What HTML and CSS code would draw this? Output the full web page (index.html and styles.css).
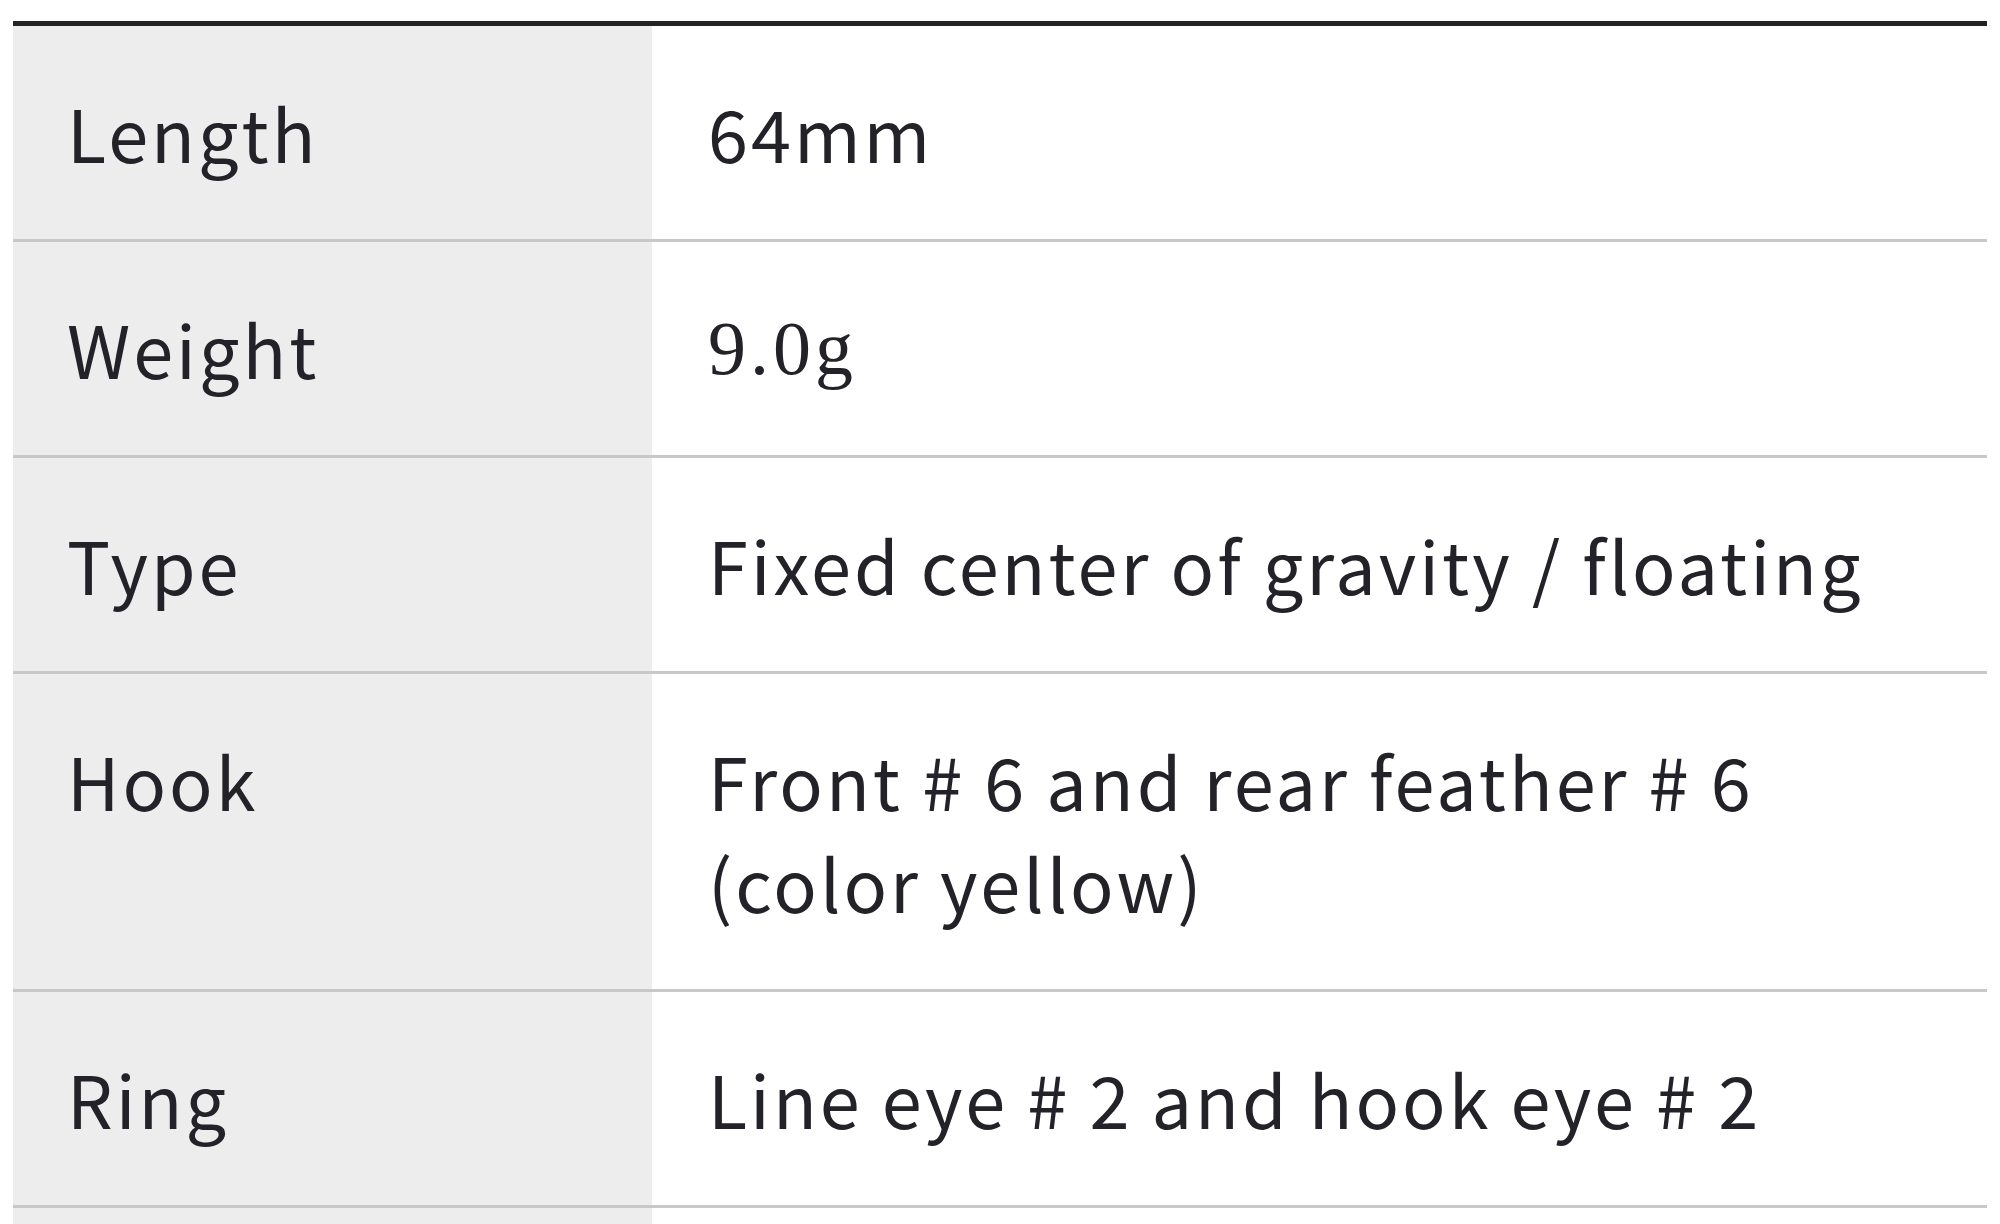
FILE: index.html
```html
<!DOCTYPE html>
<html lang="en">
<head>
<meta charset="utf-8">
<title>Spec</title>
<link rel="stylesheet" href="styles.css">
</head>
<body>
<div class="spec">
  <div class="row">
    <div class="label">Length</div>
    <div class="value">64mm</div>
  </div>
  <div class="row">
    <div class="label">Weight</div>
    <div class="value serif">9.0g</div>
  </div>
  <div class="row">
    <div class="label">Type</div>
    <div class="value">Fixed center of gravity / floating</div>
  </div>
  <div class="row">
    <div class="label">Hook</div>
    <div class="value">Front # 6 and rear feather # 6<br>(color yellow)</div>
  </div>
  <div class="row">
    <div class="label">Ring</div>
    <div class="value">Line eye # 2 and hook eye # 2</div>
  </div>
  <div class="row row-empty">
    <div class="label"></div>
    <div class="value"></div>
  </div>
</div>
</body>
</html>
```
FILE: styles.css
```css
html, body {
  margin: 0;
  padding: 0;
  background: #ffffff;
}
body {
  padding: 21px 13px 0 13px;
  font-family: "Noto Sans CJK JP", "Noto Sans", sans-serif;
  color: #222228;
}
.spec {
  width: 1974px;
  border-top: 5px solid #232323;
}
.row {
  display: grid;
  grid-template-columns: 639px 1fr;
  border-bottom: 3px solid #c8c8c8;
}
.label, .value {
  font-size: 72px;
  line-height: 102px;
  letter-spacing: 3px;
  padding: 55px 40px 56px 54px;
}
.label {
  background: #ededed;
}
.value {
  background: #ffffff;
  padding-left: 56px;
}
.serif {
  font-family: "Liberation Serif", serif;
  font-size: 76px;
  letter-spacing: 4px;
}
.row-empty .label,
.row-empty .value {
  min-height: 102px;
}
```
